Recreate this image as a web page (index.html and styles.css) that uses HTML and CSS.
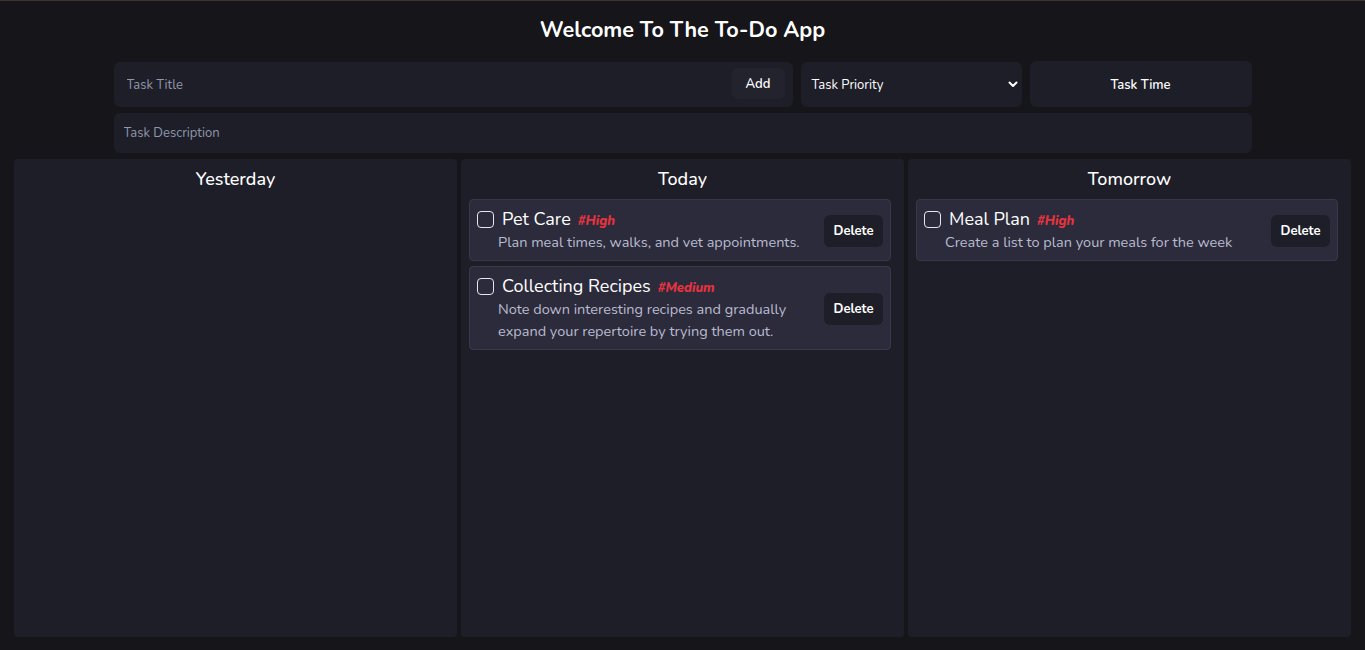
FILE: index.html
```html
<!DOCTYPE html>
<html>
<head>
<meta charset="utf-8">
<link rel="stylesheet" href="styles.css">
</head>
<body>
<h1 class="title">Welcome To The To-Do App</h1>
<form class="task-form">
  <div class="title-box">
    <input class="title-input" type="text" placeholder="Task Title">
    <button type="button" class="add-btn">Add</button>
  </div>
  <div class="select-box">
    <span>Task Priority</span>
    <svg class="chev" width="10" height="7" viewBox="0 0 10 7"><path d="M1.5 1.5 L5 5 L8.5 1.5" fill="none" stroke="#fff" stroke-width="2" stroke-linecap="round" stroke-linejoin="round"/></svg>
  </div>
  <button type="button" class="time-btn">Task Time</button>
  <input class="desc-input" type="text" placeholder="Task Description">
</form>
<main class="board">
  <section class="col">
    <h2 class="col-head">Yesterday</h2>
  </section>
  <section class="col">
    <h2 class="col-head">Today</h2>
    <div class="card">
      <div class="card-body">
        <div class="card-top"><span class="check"></span><span class="card-title">Pet Care</span><span class="tag">#High</span></div>
        <p class="card-desc">Plan meal times, walks, and vet appointments.</p>
      </div>
      <button class="del-btn">Delete</button>
    </div>
    <div class="card">
      <div class="card-body">
        <div class="card-top"><span class="check"></span><span class="card-title">Collecting Recipes</span><span class="tag">#Medium</span></div>
        <p class="card-desc">Note down interesting recipes and gradually expand your repertoire by trying them out.</p>
      </div>
      <button class="del-btn">Delete</button>
    </div>
  </section>
  <section class="col">
    <h2 class="col-head">Tomorrow</h2>
    <div class="card">
      <div class="card-body">
        <div class="card-top"><span class="check"></span><span class="card-title">Meal Plan</span><span class="tag">#High</span></div>
        <p class="card-desc">Create a list to plan your meals for the week</p>
      </div>
      <button class="del-btn">Delete</button>
    </div>
  </section>
</main>
</body>
</html>
```
FILE: styles.css
```css
* { box-sizing: border-box; }
html, body { height: 100%; }
body {
  margin: 0;
  background: #15151a;
  border-top: 1px solid #3d3430;
  font-family: "Nunito", "Lato", "Noto Sans", sans-serif;
  color: #fff;
  display: flex;
  flex-direction: column;
}
.title {
  margin: 0;
  padding-top: 14px;
  height: 61px;
  text-align: center;
  font-size: 21.6px;
  font-weight: 700;
  line-height: 30px;
}
.task-form {
  width: 1138px;
  margin: 0 auto;
  display: grid;
  grid-template-columns: 679px 221px 222px;
  column-gap: 8px;
  row-gap: 6px;
}
.title-box {
  height: 45px;
  background: #1e1e28;
  border-radius: 6px;
  display: flex;
  align-items: center;
  padding: 0 8px 0 13px;
}
.title-input, .desc-input {
  border: none;
  outline: none;
  background: transparent;
  font-family: inherit;
  font-size: 13px;
  color: #fff;
}
.title-input { flex: 1; padding: 0; }
.title-input::placeholder, .desc-input::placeholder { color: #8e97ab; }
.add-btn {
  width: 53px;
  height: 31px;
  margin-top: -2px;
  border: none;
  border-radius: 6px;
  background: #23232e;
  color: #fff;
  font-family: inherit;
  font-size: 13px;
  font-weight: 600;
}
.select-box {
  height: 45px;
  background: #1e1e28;
  border-radius: 6px;
  display: flex;
  align-items: center;
  justify-content: space-between;
  padding: 0 4px 0 11px;
  font-size: 13px;
}
.time-btn {
  height: 46px;
  margin-top: -1px;
  border: none;
  border-radius: 6px;
  background: #1e1e28;
  color: #fff;
  font-family: inherit;
  font-size: 13px;
  font-weight: 600;
  padding-top: 2px;
}
.desc-input {
  grid-column: 1 / 4;
  height: 40px;
  background: #1e1e28;
  border-radius: 6px;
  padding: 0 10px;
}
.board {
  flex: 1;
  display: grid;
  grid-template-columns: repeat(3, 1fr);
  gap: 4px;
  padding: 6px 14px 13px;
}
.col {
  background: #1e1e28;
  border-radius: 4px;
  padding: 0 8px;
  display: flex;
  flex-direction: column;
  gap: 5px;
}
.col-head {
  margin: 0;
  height: 35px;
  padding-top: 8px;
  text-align: center;
  font-size: 18px;
  font-weight: 500;
  line-height: 24px;
}
.card {
  margin-right: 5px;
  background: #2c2b3b;
  border: 1px solid #393848;
  border-radius: 4px;
  display: flex;
  align-items: center;
  justify-content: space-between;
  padding: 8px 7px 7px 7px;
}
.card-body { flex: 1; }
.card-top {
  display: flex;
  align-items: center;
  height: 22px;
}
.check {
  width: 17px;
  height: 17px;
  border: 1.5px solid #e6e6ee;
  border-radius: 4px;
  margin-right: 8px;
}
.card-title { font-size: 18px; }
.tag {
  margin-left: 7px;
  margin-top: 3px;
  color: #e8333f;
  font-size: 13px;
  font-weight: 800;
  font-style: italic;
}
.card-desc {
  margin: 0;
  padding: 1px 0 0 21px;
  font-size: 14.5px;
  line-height: 22px;
  color: #b9bcd0;
  max-width: 330px;
}
.del-btn {
  width: 59px;
  height: 32px;
  border: none;
  border-radius: 6px;
  background: #1e1e28;
  color: #fff;
  font-family: inherit;
  font-size: 13px;
  font-weight: 700;
  flex: none;
}
```
